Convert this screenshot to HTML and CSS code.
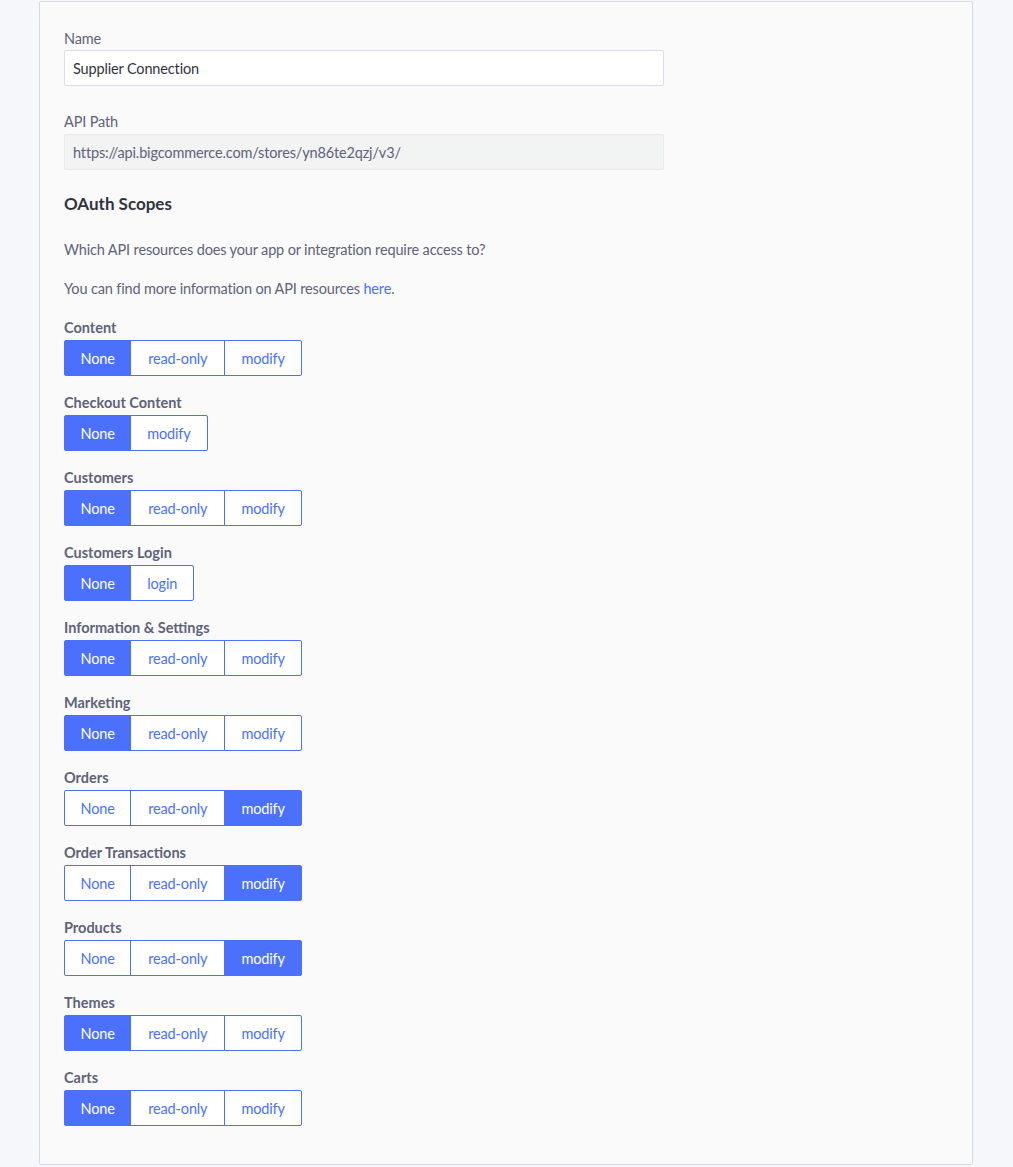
FILE: index.html
```html
<!DOCTYPE html>
<html lang="en">
<head>
<meta charset="utf-8">
<title>Supplier Connection</title>
<link rel="stylesheet" href="styles.css">
</head>
<body>
<div class="card">
  <div class="field">
    <label class="field-label">Name</label>
    <div class="input">Supplier Connection</div>
  </div>
  <div class="field">
    <label class="field-label">API Path</label>
    <div class="input input-readonly">https://api.bigcommerce.com/stores/yn86te2qzj/v3/</div>
  </div>
  <h2 class="heading">OAuth Scopes</h2>
  <p class="text">Which API resources does your app or integration require access to?</p>
  <p class="text text-last">You can find more information on API resources <a class="link" href="#">here</a>.</p>

  <div class="scope">
    <div class="scope-label">Content</div>
    <div class="btn-group"><span class="btn active">None</span><span class="btn">read-only</span><span class="btn">modify</span></div>
  </div>
  <div class="scope">
    <div class="scope-label">Checkout Content</div>
    <div class="btn-group"><span class="btn active">None</span><span class="btn">modify</span></div>
  </div>
  <div class="scope">
    <div class="scope-label">Customers</div>
    <div class="btn-group"><span class="btn active">None</span><span class="btn">read-only</span><span class="btn">modify</span></div>
  </div>
  <div class="scope">
    <div class="scope-label">Customers Login</div>
    <div class="btn-group"><span class="btn active">None</span><span class="btn">login</span></div>
  </div>
  <div class="scope">
    <div class="scope-label">Information &amp; Settings</div>
    <div class="btn-group"><span class="btn active">None</span><span class="btn">read-only</span><span class="btn">modify</span></div>
  </div>
  <div class="scope">
    <div class="scope-label">Marketing</div>
    <div class="btn-group"><span class="btn active">None</span><span class="btn">read-only</span><span class="btn">modify</span></div>
  </div>
  <div class="scope">
    <div class="scope-label">Orders</div>
    <div class="btn-group"><span class="btn">None</span><span class="btn">read-only</span><span class="btn active">modify</span></div>
  </div>
  <div class="scope">
    <div class="scope-label">Order Transactions</div>
    <div class="btn-group"><span class="btn">None</span><span class="btn">read-only</span><span class="btn active">modify</span></div>
  </div>
  <div class="scope">
    <div class="scope-label">Products</div>
    <div class="btn-group"><span class="btn">None</span><span class="btn">read-only</span><span class="btn active">modify</span></div>
  </div>
  <div class="scope">
    <div class="scope-label">Themes</div>
    <div class="btn-group"><span class="btn active">None</span><span class="btn">read-only</span><span class="btn">modify</span></div>
  </div>
  <div class="scope">
    <div class="scope-label">Carts</div>
    <div class="btn-group"><span class="btn active">None</span><span class="btn">read-only</span><span class="btn">modify</span></div>
  </div>
</div>
</body>
</html>
```
FILE: styles.css
```css
* { box-sizing: border-box; }
html, body {
  margin: 0;
  padding: 0;
  background: #f5f7fa;
  font-family: "Lato", "Liberation Sans", sans-serif;
  font-size: 14.5px;
  letter-spacing: -0.15px;
  color: #5e637a;
}
.card {
  margin: 1px 0 0 39px;
  width: 934px;
  background: #fafafa;
  border: 1px solid #d4d9e3;
  border-radius: 2px;
  padding: 25px 24px 22px 24px;
}
.field { margin-bottom: 24px; width: 600px; }
.field-label {
  display: block;
  line-height: 24px;
  height: 24px;
  color: #5e637a;
}
.field:first-child .field-label { height: 23px; }
.input {
  height: 36px;
  line-height: 35px;
  border: 1px solid #d9dce9;
  border-radius: 2px;
  background: #fff;
  padding: 0 8px;
  color: #313440;
}
.input-readonly {
  background: #f2f3f3;
  border-color: #e8eaea;
  color: #5e637a;
}
.heading {
  margin: -2px 0 0 0;
  font-size: 17px;
  font-weight: 700;
  line-height: 24px;
  letter-spacing: 0;
  color: #313440;
}
.text {
  margin: 22px 0 0 0;
  line-height: 24px;
}
.text-last { margin-top: 15px; margin-bottom: 16px; }
.link { color: #4b71fc; text-decoration: none; }
.scope { margin-bottom: 16px; }
.scope-label {
  font-size: 14.5px;
  font-weight: 700;
  line-height: 20px;
  letter-spacing: 0;
  padding-top: 1px;
  margin-bottom: 2px;
  color: #5e637a;
}
.btn-group { display: flex; }
.btn {
  height: 36px;
  line-height: 35px;
  padding: 0 17px;
  border: 1px solid #4b71fc;
  background: #fff;
  color: #4b71fc;
  margin-left: -1px;
}
.btn:first-child { margin-left: 0; border-radius: 2px 0 0 2px; padding: 0 15.5px; }
.btn:last-child { border-radius: 0 2px 2px 0; padding: 0 16px; }
.btn.active { background: #4b71fc; color: #fff; }
```
